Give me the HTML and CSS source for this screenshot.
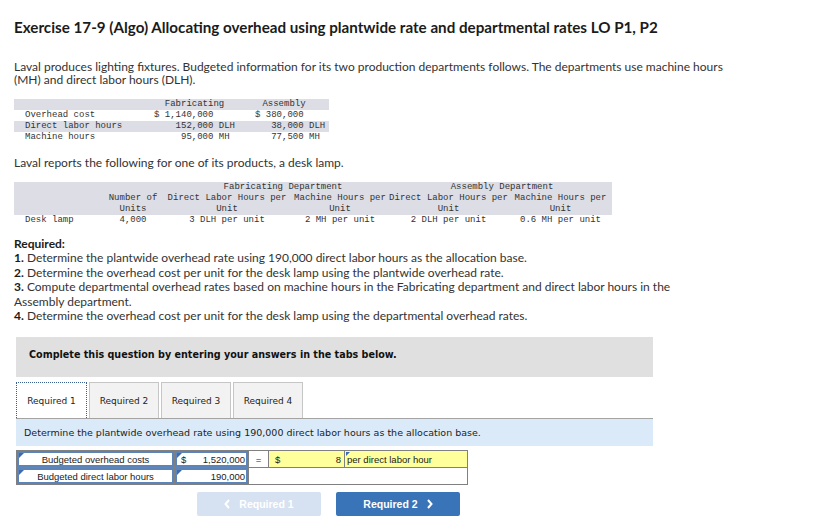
FILE: index.html
```html
<!DOCTYPE html>
<html lang="en">
<head>
<meta charset="utf-8">
<title>Exercise 17-9 (Algo)</title>
<link rel="stylesheet" href="styles.css">
</head>
<body>
<div class="page">
  <h1 class="title">Exercise 17-9 (Algo) Allocating overhead using plantwide rate and departmental rates LO P1, P2</h1>
  <p class="intro">Laval produces lighting fixtures. Budgeted information for its two production departments follows. The departments use machine hours (MH) and direct labor hours (DLH).</p>

  <table class="mono budget">
    <colgroup><col class="b-c1"><col class="b-c2"><col class="b-c3"></colgroup>
    <thead>
      <tr class="shade"><th></th><th class="pre">  Fabricating</th><th class="pre asm-h"> Assembly</th></tr>
    </thead>
    <tbody>
      <tr><td class="lbl">Overhead cost</td><td class="pre">$ 1,140,000</td><td class="pre">$ 380,000</td></tr>
      <tr class="shade"><td class="lbl">Direct labor hours</td><td class="pre">    152,000 DLH</td><td class="pre">   38,000 DLH</td></tr>
      <tr><td class="lbl">Machine hours</td><td class="pre">     95,000 MH</td><td class="pre">   77,500 MH</td></tr>
    </tbody>
  </table>

  <p class="text reports">Laval reports the following for one of its products, a desk lamp.</p>

  <table class="mono product">
    <colgroup><col class="p-c1"><col class="p-c2"><col class="p-c3"><col class="p-c4"><col class="p-c5"><col class="p-c6"></colgroup>
    <thead class="shade">
      <tr><th></th><th></th><th colspan="2" class="fab-h">Fabricating Department</th><th colspan="2" class="asm-dh">Assembly Department</th></tr>
      <tr><th></th><th>Number of Units</th><th>Direct Labor Hours per Unit</th><th>Machine Hours per Unit</th><th>Direct Labor Hours per Unit</th><th>Machine Hours per Unit</th></tr>
    </thead>
    <tbody>
      <tr><td class="lbl">Desk lamp</td><td class="ctr">4,000</td><td class="ctr">3 DLH per unit</td><td class="ctr">2 MH per unit</td><td class="ctr">2 DLH per unit</td><td class="ctr">0.6 MH per unit</td></tr>
    </tbody>
  </table>

  <div class="required">
    <p class="req-head">Required:</p>
    <p><b>1.</b> Determine the plantwide overhead rate using 190,000 direct labor hours as the allocation base.</p>
    <p><b>2.</b> Determine the overhead cost per unit for the desk lamp using the plantwide overhead rate.</p>
    <p><b>3.</b> Compute departmental overhead rates based on machine hours in the Fabricating department and direct labor hours in the<br>Assembly department.</p>
    <p><b>4.</b> Determine the overhead cost per unit for the desk lamp using the departmental overhead rates.</p>
  </div>

  <div class="question">
    <div class="notice">Complete this question by entering your answers in the tabs below.</div>

    <div class="tabs">
      <div class="tab active">Required 1</div>
      <div class="tab">Required 2</div>
      <div class="tab">Required 3</div>
      <div class="tab">Required 4</div>
    </div>
    <div class="prompt">Determine the plantwide overhead rate using 190,000 direct labor hours as the allocation base.</div>

    <table class="answer">
      <colgroup><col class="a-c1"><col class="a-c2"><col class="a-c3"><col class="a-c4"><col class="a-c5"></colgroup>
      <tr>
        <td class="in lab">Budgeted overhead costs</td>
        <td class="in num"><span class="cur">$</span>1,520,000</td>
        <td class="eq">=</td>
        <td class="yel num"><span class="cur">$</span>8</td>
        <td class="yel unit">per direct labor hour</td>
      </tr>
      <tr>
        <td class="in lab">Budgeted direct labor hours</td>
        <td class="in num">190,000</td>
        <td class="blank" colspan="3"></td>
      </tr>
    </table>

    <div class="nav">
      <button class="btn disabled" type="button"><svg class="chev" viewBox="0 0 6 10" width="6" height="10"><polyline points="5,1 1.5,5 5,9" fill="none" stroke="currentColor" stroke-width="2"/></svg>Required 1</button>
      <button class="btn primary" type="button">Required 2<svg class="chev" viewBox="0 0 6 10" width="6" height="10"><polyline points="1,1 4.5,5 1,9" fill="none" stroke="currentColor" stroke-width="2"/></svg></button>
    </div>
  </div>
</div>
</body>
</html>
```

FILE: styles.css
```css
* { box-sizing: border-box; }

body {
  margin: 0;
  background: #fff;
  color: #333;
  font-family: Lato, "Open Sans", sans-serif;
}

.page {
  padding: 18px 14px 0;
}

.title {
  margin: 0;
  font-size: 15.2px;
  line-height: 18px;
  font-weight: 700;
  color: #1b1b1b;
}

.intro,
.text {
  font-size: 12px;
  line-height: 13px;
  color: #333;
}

.intro {
  margin: 24px 0 0;
  width: 722px;
}

/* monospace data tables */
.mono {
  border-collapse: collapse;
  table-layout: fixed;
  font-family: "Liberation Mono", "DejaVu Sans Mono", monospace;
  font-size: 9px;
  line-height: 11px;
  color: #333;
}

.mono th,
.mono td {
  padding: 0;
  font-weight: 400;
  vertical-align: bottom;
}

.shade,
.mono .shade th,
.mono tr.shade td {
  background: #dcdde5;
}

.pre {
  white-space: pre;
  text-align: left;
}

.lbl {
  padding-left: 11px !important;
  text-align: left;
  white-space: nowrap;
}

.budget {
  margin-top: 13px;
  width: 315px;
}
.b-c1 { width: 140px; }
.b-c2 { width: 101px; }
.b-c3 { width: 74px; }
.mono .asm-h { padding-left: 2px; }

.reports {
  margin: 13px 0 0;
}

.product {
  margin-top: 13px;
  width: 598px;
}
.p-c1 { width: 90px; }
.p-c2 { width: 58px; }
.p-c3 { width: 130px; }
.p-c4 { width: 96px; }
.p-c5 { width: 121px; }
.p-c6 { width: 103px; }

.product th {
  text-align: center;
}
.mono .fab-h { padding-left: 16px; }
.mono .asm-dh { padding-left: 4px; }

.ctr {
  text-align: center;
  white-space: nowrap;
}

/* required list */
.required {
  margin-top: 11px;
  width: 700px;
  font-size: 12px;
  line-height: 14.4px;
  color: #333;
}
.required p {
  margin: 0;
}
.required b,
.req-head {
  font-weight: 700;
  color: #1b1b1b;
}

/* question area */
.question {
  margin: 14px 0 0 2px;
  width: 637px;
  font-family: "DejaVu Sans", Verdana, sans-serif;
}

.notice {
  background: #e0e0e0;
  height: 40px;
  padding: 11px 0 0 13px;
  font-size: 9.6px;
  line-height: 14px;
  font-weight: 700;
  color: #111;
}

.tabs {
  display: flex;
  gap: 2px;
  margin-top: 5px;
  border-bottom: 1px solid #a3a3a3;
}

.tab {
  width: 70px;
  height: 36px;
  display: flex;
  align-items: center;
  justify-content: center;
  background: #f2f2f2;
  border: 1px solid #c6c6c6;
  border-bottom: none;
  font-size: 9px;
  color: #222;
}

.tab.active {
  width: 71px;
  background: #fff;
  border: 1px dotted #3a5f95;
  border-bottom: none;
}

.prompt {
  background: #dbeaf8;
  height: 27px;
  padding: 8px 0 0 8px;
  font-size: 9.5px;
  line-height: 12px;
  color: #222;
}

/* answer grid */
.answer {
  margin-top: 4px;
  border-collapse: collapse;
  table-layout: fixed;
  width: 451px;
  border: 1px solid #808080;
  font-family: "Liberation Sans", Arial, sans-serif;
  font-size: 9.5px;
  color: #222;
}
.a-c1 { width: 158px; }
.a-c2 { width: 74px; }
.a-c3 { width: 20px; }
.a-c4 { width: 76px; }
.a-c5 { width: 123px; }

.answer td {
  height: 17px;
  padding: 0 3px;
  border: 1px solid #808080;
  line-height: 13px;
  white-space: nowrap;
}

.answer .in {
  position: relative;
  box-shadow: inset 0 0 0 2px #5d84b8;
}
.answer .in::before {
  content: "";
  position: absolute;
  left: 2px;
  top: 2px;
  border-top: 5px solid #3c6bb0;
  border-right: 5px solid transparent;
}

.lab { text-align: center; }
.num { text-align: right; }
.cur { float: left; padding-left: 3px; }
.eq { text-align: center; }
.yel {
  background: #ffff9c;
}
.unit {
  position: relative;
  text-align: left;
  padding-left: 2px !important;
}
.unit::before {
  content: "";
  position: absolute;
  left: 1px;
  top: 1px;
  border-top: 4px solid #3c6bb0;
  border-right: 4px solid transparent;
}

/* navigation */
.nav {
  display: flex;
  gap: 15px;
  margin: 7px 0 0 181px;
}

.btn {
  width: 124px;
  height: 24px;
  border: none;
  border-radius: 2px;
  display: flex;
  align-items: center;
  justify-content: center;
  gap: 9px;
  font-family: "Liberation Sans", Arial, sans-serif;
  font-size: 10.5px;
  font-weight: 700;
  color: #fff;
  padding: 0;
}

.btn.disabled {
  background: #d6e2f1;
}

.btn.primary {
  background: #3a74b8;
}

.chev {
  display: block;
}
```
